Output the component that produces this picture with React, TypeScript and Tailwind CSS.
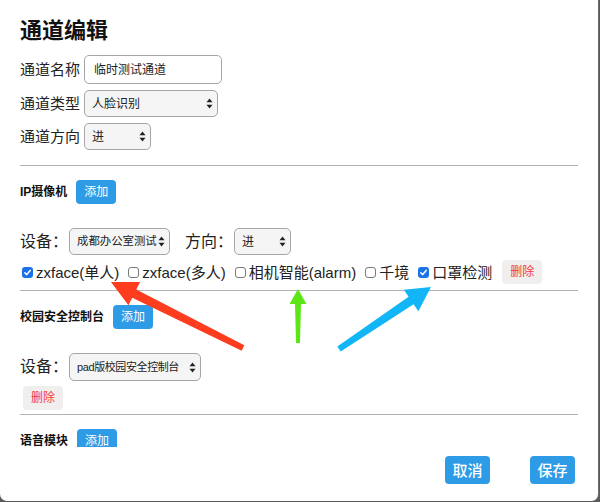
import React from "react";

const cjk = "font-['Liberation_Sans','Noto_Sans_CJK_SC',sans-serif]";

type Pt = [number, number];

// tapered annotation arrow, drawn like a screenshot markup tool
function arrowPoints(tail: Pt, tip: Pt, wTail: number, wNeck: number, headLen: number, headW: number) {
  const dx = tip[0] - tail[0];
  const dy = tip[1] - tail[1];
  const len = Math.hypot(dx, dy);
  const ux = dx / len, uy = dy / len;
  const nx = -uy, ny = ux;
  const neck: Pt = [tip[0] - ux * headLen, tip[1] - uy * headLen];
  const p = (b: Pt, w: number): string => `${b[0] + nx * w},${b[1] + ny * w}`;
  return [
    p(tail, wTail / 2),
    p(neck, wNeck / 2),
    p(neck, headW / 2),
    `${tip[0]},${tip[1]}`,
    p(neck, -headW / 2),
    p(neck, -wNeck / 2),
    p(tail, -wTail / 2),
  ].join(" ");
}

function SelectArrows() {
  return (
    <svg width="7" height="11" viewBox="0 0 7 11" className="shrink-0">
      <path d="M3.5 0.5 L6.5 4.2 H0.5 Z" fill="#222" />
      <path d="M3.5 10.5 L6.5 6.8 H0.5 Z" fill="#222" />
    </svg>
  );
}

function FakeSelect({ value, width, height = 27, text = "text-[12px]" }: { value: string; width: string; height?: number; text?: string }) {
  return (
    <div
      className={`${width} flex items-center justify-between pl-[7px] pr-[4px] bg-[#f5f5f5] border border-[#a6a6a6] rounded-[5px] ${text} leading-none text-[#222]`}
      style={{ height }}
    >
      <span className="whitespace-nowrap">{value}</span>
      <SelectArrows />
    </div>
  );
}

function Check({ checked }: { checked?: boolean }) {
  if (checked) {
    return (
      <span className="w-[11px] h-[11px] rounded-[3px] bg-[#1b72e8] flex items-center justify-center shrink-0">
        <svg width="9" height="9" viewBox="0 0 9 9">
          <path d="M1.8 4.8 L3.7 6.6 L7.2 2.4" stroke="white" strokeWidth="1.5" fill="none" strokeLinecap="round" strokeLinejoin="round" />
        </svg>
      </span>
    );
  }
  return <span className="w-[11px] h-[11px] rounded-[3px] bg-white border border-[#7a7a7a] shrink-0" />;
}

function AddBtn() {
  return (
    <button className="ml-[9px] w-10 h-6 rounded-[4px] bg-[#2e9be6] text-white text-[12px] leading-none">添加</button>
  );
}

function DelBtn() {
  return (
    <button className="w-10 h-6 rounded-[4px] bg-[#f1eeee] text-[#f23a3a] text-[12px] leading-none">删除</button>
  );
}

function SectionHead({ title }: { title: string }) {
  return (
    <div className="flex items-center h-6">
      <span className="text-[12px] leading-none font-bold text-[#111]">{title}</span>
      <AddBtn />
    </div>
  );
}

const options = [
  { label: "zxface(单人)", checked: true },
  { label: "zxface(多人)" },
  { label: "相机智能(alarm)" },
  { label: "千境" },
  { label: "口罩检测", checked: true },
];

export default function App() {
  return (
    <div className={`w-[600px] h-[502px] bg-[#5a5a5a] ${cjk}`}>
      <div className="relative w-[599px] h-[501px] bg-white border-r border-[#6e6e6e] rounded-b-[7px] flex flex-col overflow-hidden">
        <div className="h-[447px] shrink-0 overflow-hidden px-5 pt-4">
          <h2 className="text-[22px] leading-[30px] font-bold text-[#111]">通道编辑</h2>

          <div className="mt-[9px] flex items-center gap-1">
            <span className="text-[15px] leading-none text-[#222] w-[60px]">通道名称</span>
            <div className="w-[138px] h-[29px] border border-[#a6a6a6] rounded-[5px] flex items-center pl-[9px] text-[12px] leading-none text-[#222]">
              临时测试通道
            </div>
          </div>
          <div className="mt-[6px] flex items-center gap-1">
            <span className="text-[15px] leading-none text-[#222] w-[60px]">通道类型</span>
            <FakeSelect value="人脸识别" width="w-[134px]" />
          </div>
          <div className="mt-[6px] flex items-center gap-1">
            <span className="text-[15px] leading-none text-[#222] w-[60px]">通道方向</span>
            <FakeSelect value="进" width="w-[67px]" />
          </div>

          <hr className="mt-[15px] border-t border-[#b3b3b3]" />

          <div className="mt-[14px]">
            <SectionHead title="IP摄像机" />
          </div>

          <div className="mt-6 flex items-center">
            <span className="text-[16px] leading-none text-[#222] w-[49px]">设备：</span>
            <FakeSelect value="成都办公室测试" width="w-[101px]" text="text-[11.4px]" />
            <span className="ml-[15px] text-[16px] leading-none text-[#222] w-[49px]">方向：</span>
            <FakeSelect value="进" width="w-[57px]" />
          </div>

          <div className="mt-[5px] h-6 flex items-center gap-[9px] pl-[2px]">
            {options.map((o) => (
              <label key={o.label} className="flex items-center gap-[3px] text-[15px] leading-none text-[#222] whitespace-nowrap">
                <Check checked={o.checked} />
                <span>{o.label}</span>
              </label>
            ))}
            <div className="ml-px flex">
              <DelBtn />
            </div>
          </div>

          <hr className="mt-[6px] border-t border-[#b3b3b3]" />

          <div className="mt-[14px]">
            <SectionHead title="校园安全控制台" />
          </div>

          <div className="mt-6 flex items-center">
            <span className="text-[16px] leading-none text-[#222] w-[49px]">设备：</span>
            <FakeSelect value="pad版校园安全控制台" width="w-[132px]" height={28} text="text-[11px] tracking-[-0.4px]" />
          </div>
          <div className="mt-[5px] pl-[3px] flex">
            <DelBtn />
          </div>

          <hr className="mt-[4px] border-t border-[#b3b3b3]" />

          <div className="mt-[14px]">
            <SectionHead title="语音模块" />
          </div>
        </div>

        <div className="flex justify-end gap-10 pr-[23px] pt-[9px]">
          <button className="w-[45px] h-7 rounded-[4px] bg-[#2e9be6] text-white text-[15px] leading-none font-medium">取消</button>
          <button className="w-[45px] h-7 rounded-[4px] bg-[#2e9be6] text-white text-[15px] leading-none font-medium">保存</button>
        </div>

        <svg className="absolute inset-0 pointer-events-none" width="599" height="501">
          <polygon points={arrowPoints([243, 348], [111, 282], 6, 9, 26, 26)} fill="#fe3c1e" strokeLinejoin="round" />
          <polygon points={arrowPoints([298, 343], [298, 289], 4, 6, 15, 17)} fill="#5de617" strokeLinejoin="round" />
          <polygon points={arrowPoints([339, 349], [431, 287], 6, 9, 24, 26)} fill="#12b6f6" strokeLinejoin="round" />
        </svg>
      </div>
    </div>
  );
}
